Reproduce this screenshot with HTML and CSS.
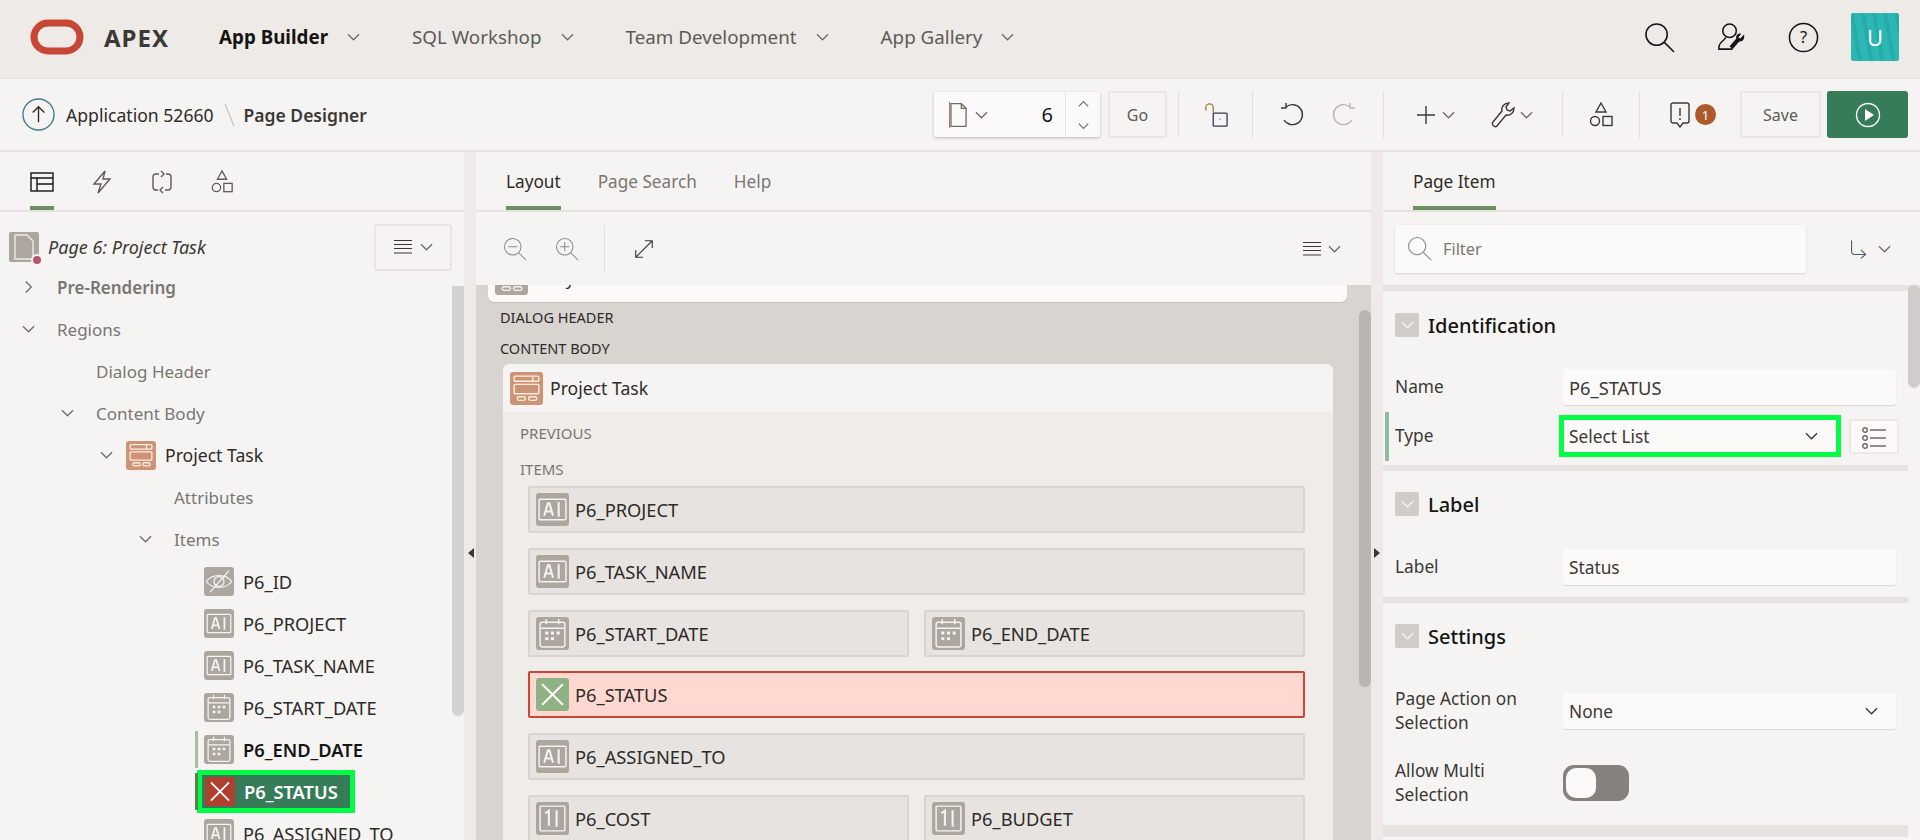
FILE: index.html
```html
<!DOCTYPE html>
<html lang="en">
<head>
    <meta charset="UTF-8">
    <title>Page Designer</title>
    <link rel="stylesheet" href="styles.css">
</head>
<body>
    <svg class="defs" width="0" height="0">
        <symbol id="chev" viewBox="0 0 14 8"><path d="M1 1l6 6 6-6"/></symbol>
        <symbol id="ic-ai" viewBox="0 0 32 32"><rect x="3" y="6" width="26" height="20" rx="1"/><path d="M8 22l3.5-12h1.5l3.5 12M9.500 18h6M22 9v14" stroke-width="2"/></symbol>
        <symbol id="ic-num" viewBox="0 0 32 32"><rect x="4" y="4" width="24" height="24" rx="1"/><path d="M9 11l3.500-2.500V23M20 8v16" stroke-width="2"/></symbol>
        <symbol id="ic-cal" viewBox="0 0 32 32"><rect x="4" y="5" width="24" height="24" rx="2"/><path d="M4 11h24M10 2v5M22 2v5"/><path d="M9 15.500h3M14.500 15.500h3M20 15.500h3M9 21h3M14.500 21h3" stroke-width="2.800"/></symbol>
        <symbol id="ic-eye" viewBox="0 0 32 32"><path d="M2 16c6-8.500 22-8.500 28 0-6 8.500-22 8.500-28 0z"/><circle cx="16" cy="16" r="5.500"/><path d="M6 28L27 4"/></symbol>
        <symbol id="ic-x" viewBox="0 0 32 32"><path d="M6 6l20 20M26 6L6 26" stroke-width="2"/></symbol>
        <symbol id="ic-region" viewBox="0 0 32 32"><rect x="4" y="4" width="24" height="5" rx="1"/><rect x="4" y="12" width="24" height="9" rx="1"/><rect x="7" y="24" width="8" height="3.500" rx="1.700"/><rect x="18" y="24" width="8" height="3.500" rx="1.700"/><path d="M22 4v5"/></symbol>
        <symbol id="ic-shapes" viewBox="0 0 24 26"><path d="M12 1l5 9H7z"/><circle cx="6" cy="19" r="4.500"/><rect x="14" y="14.500" width="9" height="9"/></symbol>
        <symbol id="ic-lines" viewBox="0 0 18 14"><path d="M0 .5h18M0 4.500h18M0 8.500h18M0 13h18"/></symbol>
        <symbol id="ic-search" viewBox="0 0 32 32"><circle cx="13" cy="13" r="11"/><path d="M21 21l10 10"/></symbol>
    </svg>

    <header class="topbar">
        <svg class="logo" viewBox="0 0 54 36"><rect x="4" y="4" width="46" height="28" rx="14"/></svg>
        <span class="brand">APEX</span>
        <nav class="mainnav">
            <a class="nav-link active">App Builder <svg class="chev"><use href="#chev"/></svg></a>
            <a class="nav-link">SQL Workshop <svg class="chev"><use href="#chev"/></svg></a>
            <a class="nav-link">Team Development <svg class="chev"><use href="#chev"/></svg></a>
            <a class="nav-link">App Gallery <svg class="chev"><use href="#chev"/></svg></a>
        </nav>
        <div class="top-actions">
            <svg class="top-icon"><use href="#ic-search"/></svg>
            <svg class="top-icon" viewBox="0 0 32 32"><circle cx="14" cy="9" r="7"/><path d="M10 16c-1 3-7 5-7 10v2h14"/><path class="solid" d="M29 13l-4 4-2-1 3-4c-3-1-6 2-5 5l-7 8 3 3 7-8c3 1 6-2 5-7z"/></svg>
            <svg class="top-icon" viewBox="0 0 32 32"><circle cx="16" cy="16" r="14.500"/><text class="help-mark" x="16" y="22" text-anchor="middle">?</text></svg>
            <span class="avatar">U</span>
        </div>
    </header>

    <div class="toolbar">
        <svg class="up-icon" viewBox="0 0 34 34"><circle cx="17" cy="17" r="16"/><path class="dark" d="M17 25V9M11 15l6-6 6 6"/></svg>
        <span class="crumb">Application 52660</span>
        <span class="crumb-sep"></span>
        <strong class="crumb-now">Page Designer</strong>

        <div class="tools">
            <div class="page-picker">
                <svg class="pg-icon" viewBox="0 0 18 26"><path d="M1 1h11l5 5v19H1z"/><path d="M12 1v5h5"/></svg>
                <svg class="chev"><use href="#chev"/></svg>
                <span class="pg-num">6</span>
                <span class="pg-spin">
                    <svg class="chev flip"><use href="#chev"/></svg>
                    <svg class="chev"><use href="#chev"/></svg>
                </span>
            </div>
            <button class="btn go-btn">Go</button>
            <span class="sep first"></span>
            <svg class="tool lock" viewBox="0 0 26 26"><rect class="navy" x="10" y="11" width="15" height="14" rx="1"/><path class="gold" d="M2 8V5a4 4 0 0 1 8 0v6"/><path class="navy" d="M17.500 17v1"/></svg>
            <span class="sep sep-lock"></span>
            <svg class="tool undo" viewBox="0 0 24 26"><path d="M6 5a10 10 0 1 1-2 13M6 1v5H1"/></svg>
            <svg class="tool redo" viewBox="0 0 24 26"><path d="M18 5a10 10 0 1 0 2 13M18 1v5h5"/></svg>
            <span class="sep sep-redo"></span>
            <svg class="tool plus" viewBox="0 0 18 18"><path d="M9 0v18M0 9h18"/></svg>
            <svg class="chev"><use href="#chev"/></svg>
            <svg class="tool wrench" viewBox="0 0 24 26"><path d="M3 24c-2-1-2-3-1-4L11 9c-1-4 2-8 7-8l-3 4 1 3 3 1 4-3c0 5-4 8-8 7L6 24c-1 1-2 1-3 0z"/></svg>
            <svg class="chev"><use href="#chev"/></svg>
            <span class="sep sep-wrench"></span>
            <svg class="tool shapes"><use href="#ic-shapes"/></svg>
            <span class="sep sep-shapes"></span>
            <svg class="tool alert" viewBox="0 0 20 26"><path d="M3 1h14a2 2 0 0 1 2 2v16a2 2 0 0 1-2 2h-4l-3 4-3-4H3a2 2 0 0 1-2-2V3a2 2 0 0 1 2-2z"/><path d="M10 6v8M10 16v2"/></svg>
            <span class="badge">1</span>
            <button class="btn save-btn">Save</button>
            <button class="btn run-btn"><svg viewBox="0 0 26 26"><circle cx="13" cy="13" r="11.500"/><path class="play" d="M10 7l9 6-9 6z"/></svg></button>
        </div>
    </div>

    <div class="workspace">
        <aside class="left">
            <div class="tabs">
                <span class="icon-tab on"><svg viewBox="0 0 24 22"><rect x="1" y="2" width="22" height="18"/><path d="M1 7h22M7 7v13M7 13h16"/></svg></span>
                <span class="icon-tab"><svg viewBox="0 0 20 24"><path d="M13 1L2 14h7l-3 9 12-14h-7z"/></svg></span>
                <span class="icon-tab"><svg viewBox="0 0 24 24"><path d="M9 4H6a3 3 0 0 0-3 3v10a3 3 0 0 0 3 3h2M15 20h3a3 3 0 0 0 3-3V7a3 3 0 0 0-3-3h-2M11 1l3 3-3 3M13 17l-3 3 3 3"/></svg></span>
                <span class="icon-tab"><svg><use href="#ic-shapes"/></svg></span>
            </div>
            <div class="panel-bar">
                <span class="page-tile">
                    <svg viewBox="0 0 30 30"><path d="M6 3h12l6 6v18H6z"/></svg>
                    <i class="dot"></i>
                </span>
                <em class="page-title">Page 6: Project Task</em>
                <button class="menu-btn"><svg class="lines"><use href="#ic-lines"/></svg><svg class="chev"><use href="#chev"/></svg></button>
            </div>
            <ul class="tree">
                <li class="row lv0 strong"><svg class="chev side"><use href="#chev"/></svg>Pre-Rendering</li>
                <li class="row lv0"><svg class="chev"><use href="#chev"/></svg>Regions</li>
                <li class="row lv1 leaf">Dialog Header</li>
                <li class="row lv1"><svg class="chev"><use href="#chev"/></svg>Content Body</li>
                <li class="row lv2 dark"><svg class="chev"><use href="#chev"/></svg><svg class="tile tile-region"><use href="#ic-region"/></svg>Project Task</li>
                <li class="row lv3 leaf">Attributes</li>
                <li class="row lv3"><svg class="chev"><use href="#chev"/></svg>Items</li>
                <li class="row item"><svg class="tile"><use href="#ic-eye"/></svg>P6_ID</li>
                <li class="row item"><svg class="tile"><use href="#ic-ai"/></svg>P6_PROJECT</li>
                <li class="row item"><svg class="tile"><use href="#ic-ai"/></svg>P6_TASK_NAME</li>
                <li class="row item"><svg class="tile"><use href="#ic-cal"/></svg>P6_START_DATE</li>
                <li class="row item changed"><svg class="tile"><use href="#ic-cal"/></svg>P6_END_DATE</li>
                <li class="row item selected"><span class="sel-box"><svg class="tile tile-red"><use href="#ic-x"/></svg>P6_STATUS</span></li>
                <li class="row item"><svg class="tile"><use href="#ic-ai"/></svg>P6_ASSIGNED_TO</li>
            </ul>
            <span class="scroll-thumb tree-thumb"></span>
        </aside>

        <div class="gutter"><i class="arrow arrow-left"></i></div>

        <main class="center">
            <div class="tabs text-tabs">
                <span class="text-tab on">Layout</span>
                <span class="text-tab">Page Search</span>
                <span class="text-tab">Help</span>
            </div>
            <div class="panel-bar center-bar">
                <svg class="zoom-icon" viewBox="0 0 32 32"><circle cx="13" cy="13" r="11"/><path d="M21 21l10 10M7 13h12"/></svg>
                <svg class="zoom-icon plus-zoom" viewBox="0 0 32 32"><circle cx="13" cy="13" r="11"/><path d="M21 21l10 10M13 7v12M7 13h12"/></svg>
                <span class="bar-sep"></span>
                <svg class="expand" viewBox="0 0 24 24"><path d="M3 21L21 3M13 3h8v8M3 13v8h8"/></svg>
                <span class="bar-end"><svg class="lines"><use href="#ic-lines"/></svg><svg class="chev"><use href="#chev"/></svg></span>
            </div>
            <div class="canvas">
                <div class="top-card"><svg class="tile tile-big"><use href="#ic-region"/></svg><span>Body</span></div>
                <div class="slot-label">DIALOG HEADER</div>
                <div class="slot-label">CONTENT BODY</div>
                <section class="region">
                    <h3 class="region-head"><svg class="tile tile-big tile-region"><use href="#ic-region"/></svg>Project Task</h3>
                    <div class="region-body">
                        <div class="sub-label">PREVIOUS</div>
                        <div class="sub-label items-label">ITEMS</div>
                        <div class="item-grid">
                            <div class="page-item wide"><svg class="tile tile-big"><use href="#ic-ai"/></svg>P6_PROJECT</div>
                            <div class="page-item wide"><svg class="tile tile-big"><use href="#ic-ai"/></svg>P6_TASK_NAME</div>
                            <div class="page-item"><svg class="tile tile-big"><use href="#ic-cal"/></svg>P6_START_DATE</div>
                            <div class="page-item"><svg class="tile tile-big"><use href="#ic-cal"/></svg>P6_END_DATE</div>
                            <div class="page-item wide picked"><svg class="tile tile-big tile-green"><use href="#ic-x"/></svg>P6_STATUS</div>
                            <div class="page-item wide"><svg class="tile tile-big"><use href="#ic-ai"/></svg>P6_ASSIGNED_TO</div>
                            <div class="page-item"><svg class="tile tile-big"><use href="#ic-num"/></svg>P6_COST</div>
                            <div class="page-item"><svg class="tile tile-big"><use href="#ic-num"/></svg>P6_BUDGET</div>
                        </div>
                    </div>
                </section>
                <span class="scroll-thumb canvas-thumb"></span>
            </div>
        </main>

        <div class="gutter"><i class="arrow arrow-right"></i></div>

        <aside class="right">
            <div class="tabs text-tabs prop-tabs">
                <span class="text-tab on">Page Item</span>
            </div>
            <div class="panel-bar prop-bar">
                <div class="filter">
                    <svg class="filter-icon"><use href="#ic-search"/></svg>
                    <span>Filter</span>
                </div>
                <svg class="go-icon" viewBox="0 0 32 24"><path d="M2 1v14c0 3 2 4 4 4h14M14 13l6 6-6 5"/></svg>
                <svg class="chev"><use href="#chev"/></svg>
            </div>
            <div class="props">
                <section class="prop-group first-group">
                    <h4 class="group-head"><span class="collapse"><svg class="chev"><use href="#chev"/></svg></span>Identification</h4>
                    <div class="prop"><label>Name</label><div class="field caps">P6_STATUS</div></div>
                    <div class="prop type-row">
                        <label>Type</label>
                        <div class="field select focus">Select List<svg class="chev"><use href="#chev"/></svg></div>
                        <button class="lov-btn"><svg viewBox="0 0 24 22"><circle cx="3" cy="3" r="2.300"/><circle cx="3" cy="11" r="2.300"/><circle cx="3" cy="19" r="2.300"/><path d="M8 3h16M8 11h16M8 19h16"/></svg></button>
                    </div>
                </section>
                <section class="prop-group label-group">
                    <h4 class="group-head"><span class="collapse"><svg class="chev"><use href="#chev"/></svg></span>Label</h4>
                    <div class="prop"><label>Label</label><div class="field">Status</div></div>
                </section>
                <section class="prop-group settings-group">
                    <h4 class="group-head"><span class="collapse"><svg class="chev"><use href="#chev"/></svg></span>Settings</h4>
                    <div class="prop tall"><label>Page Action on Selection</label><div class="field select">None<svg class="chev"><use href="#chev"/></svg></div></div>
                    <div class="prop tall"><label>Allow Multi Selection</label><span class="toggle"><i></i></span></div>
                </section>
                <section class="prop-group"></section>
                <span class="scroll-thumb prop-thumb"></span>
            </div>
        </aside>
    </div>
</body>
</html>
```

FILE: styles.css
```css
* {
    box-sizing: border-box;
}

html, body {
    height: 840px;
    margin: 0;
    overflow: hidden;
}

body {
    font-family: "Noto Sans", "Open Sans", Arial, sans-serif;
    font-size: 16px;
    color: #2e2b28;
    background: #f5f4f2;
}

.defs {
    position: absolute;
}

svg {
    fill: none;
    stroke: currentColor;
    stroke-width: 1.4;
    flex: none;
}

button {
    font: inherit;
    color: inherit;
    cursor: pointer;
}

.chev {
    width: 13px;
    height: 8px;
    color: #6f6b66;
}
.chev.side {
    transform: rotate(-90deg);
}
.chev.flip {
    transform: rotate(180deg);
}

/* top bar */
.topbar {
    height: 79px;
    display: flex;
    align-items: center;
    padding: 0 0 4px 30px;
    background: #edeae7;
    border-bottom: 1px solid #e4e1de;
}

.logo {
    width: 54px;
    height: 36px;
    color: #c74634;
    stroke-width: 7;
}

.brand {
    margin-left: 20px;
    font-size: 24px;
    font-weight: 700;
    letter-spacing: 1px;
    color: #3b3835;
}

.mainnav {
    display: flex;
    margin-left: 50px;
    gap: 52px;
}

.nav-link {
    display: flex;
    align-items: center;
    gap: 19px;
    font-size: 18.800px;
    color: #5e5a56;
}
.nav-link.active {
    font-weight: 700;
    color: #161513;
}

.top-actions {
    margin-left: auto;
    margin-right: 21px;
    display: flex;
    align-items: center;
    gap: 41px;
}

.top-icon {
    width: 31px;
    height: 31px;
    color: #161513;
    stroke-width: 1.6;
}
.top-icon .solid {
    fill: #161513;
    stroke: none;
}
.help-mark {
    font-size: 17px;
    fill: #161513;
    stroke: none;
}

.avatar {
    width: 48px;
    height: 48px;
    margin-left: -9px;
    display: flex;
    align-items: center;
    justify-content: center;
    border-radius: 2px;
    background: repeating-linear-gradient(80deg, #2bb8b5 0 7px, #27aaa8 7px 11px);
    color: #fff;
    font-size: 22px;
}

/* toolbar */
.toolbar {
    height: 73px;
    display: flex;
    align-items: center;
    padding-left: 22px;
    border-bottom: 2px solid #e5e2df;
}

.up-icon {
    width: 33px;
    height: 33px;
    color: #3f7e89;
}
.up-icon .dark {
    color: #2e2b28;
}

.crumb {
    margin-left: 11px;
    font-size: 17.600px;
}
.crumb-sep {
    width: 1px;
    height: 24px;
    margin: 0 14px 0 15px;
    background: #b9b5b1;
    transform: rotate(-22deg);
}
.crumb-now {
    font-size: 17.500px;
    font-weight: 600;
    color: #3b3835;
}

.tools {
    margin-left: auto;
    margin-right: 12px;
    display: flex;
    align-items: center;
}

.page-picker {
    width: 166px;
    height: 45px;
    display: flex;
    align-items: center;
    padding-left: 15px;
    background: #fbfaf8;
    border-radius: 2px;
    box-shadow: 0 1px 3px rgba(0, 0, 0, .25);
}
.pg-icon {
    width: 18px;
    height: 26px;
    color: #6f6b66;
    border-left: 1px solid #b9795f;
}
.page-picker .chev {
    margin-left: 8px;
}
.pg-num {
    margin-left: auto;
    margin-right: 12px;
    font-size: 20px;
    color: #161513;
}
.pg-spin {
    width: 35px;
    height: 100%;
    display: flex;
    flex-direction: column;
    align-items: center;
    justify-content: center;
    gap: 14px;
    border-left: 1px solid #e5e2df;
}
.pg-spin .chev {
    margin: 0;
    width: 11px;
}

.btn {
    height: 47px;
    background: #f5f4f2;
    border: 2px solid #e8e5e2;
    border-radius: 3px;
    font-size: 16px;
    color: #5e5a56;
}
.go-btn {
    width: 59px;
    margin-left: 8px;
}
.save-btn {
    width: 81px;
    margin-left: 24px;
}
.run-btn {
    width: 81px;
    margin-left: 6px;
    display: flex;
    align-items: center;
    justify-content: center;
    background: #367c58;
    border-color: #367c58;
    color: #fff;
}
.run-btn svg {
    width: 26px;
    height: 26px;
}
.run-btn .play {
    fill: #fff;
    stroke: none;
}

.sep {
    width: 1px;
    height: 47px;
    background: #e2dfdc;
}
.sep.first {
    margin-left: 11px;
}
.sep-lock {
    margin-left: 24px;
}
.sep-redo {
    margin-left: 27px;
}
.sep-wrench {
    margin-left: 29px;
}
.sep-shapes {
    margin-left: 26px;
}

.tool {
    width: 24px;
    height: 26px;
    color: #3b3835;
}
.tool.lock {
    margin-left: 25px;
}
.lock .navy {
    color: #2e3a5c;
}
.lock .gold {
    color: #9a7b3c;
}
.tool.undo {
    margin-left: 27px;
}
.tool.redo {
    margin-left: 28px;
    color: #b9b5b1;
}
.tool.plus {
    width: 18px;
    height: 18px;
    margin-left: 33px;
}
.tools > .plus + .chev {
    margin: 0 36px 0 7px;
}
.tools > .wrench + .chev {
    margin-left: 5px;
}
.tool.shapes {
    margin-left: 26px;
}
.tool.alert {
    width: 20px;
    margin-left: 30px;
}

.badge {
    width: 21px;
    height: 21px;
    margin-left: 5px;
    display: flex;
    align-items: center;
    justify-content: center;
    border-radius: 50%;
    background: #ac5a2c;
    color: #fff;
    font-size: 13px;
}

/* main area */
.workspace {
    height: 688px;
    display: flex;
}

.left {
    position: relative;
    width: 464px;
    overflow: hidden;
}

.gutter {
    position: relative;
    width: 12px;
    background: #edeae7;
}

.arrow {
    position: absolute;
    top: 396px;
    width: 0;
    height: 0;
    border-top: 5px solid transparent;
    border-bottom: 5px solid transparent;
}
.arrow-left {
    left: 4px;
    border-right: 6px solid #3b3835;
}
.arrow-right {
    left: 3px;
    border-left: 6px solid #3b3835;
}

.center {
    width: 895px;
    display: flex;
    flex-direction: column;
}

.right {
    width: 537px;
    display: flex;
    flex-direction: column;
}

.tabs {
    height: 60px;
    display: flex;
    border-bottom: 2px solid #e5e2df;
}

.icon-tab {
    width: 24px;
    height: 58px;
    padding-top: 18px;
    margin-right: 36px;
    color: #5e5a56;
}
.icon-tab:first-child {
    margin-left: 30px;
    color: #161513;
}
.icon-tab.on {
    border-bottom: 4px solid #6b8e62;
}
.icon-tab svg {
    display: block;
    width: 24px;
    height: 24px;
}

.text-tabs {
    padding-left: 30px;
    gap: 37px;
}
.text-tab {
    height: 58px;
    padding-top: 18px;
    font-size: 17.200px;
    color: #7a7672;
}
.text-tab.on {
    color: #2e2b28;
    border-bottom: 4px solid #6b8e62;
}

.panel-bar {
    display: flex;
    align-items: center;
    height: 73px;
}

.left .panel-bar {
    height: 54px;
    padding: 16px 12px 0 9px;
}

.page-tile {
    position: relative;
    width: 30px;
    height: 30px;
    border-radius: 2px;
    background: #ada69e;
}
.page-tile svg {
    width: 30px;
    height: 30px;
    color: #edeae7;
}
.dot {
    position: absolute;
    right: -4px;
    bottom: -4px;
    width: 12px;
    height: 12px;
    border-radius: 50%;
    background: #b5566f;
    border: 2px solid #f5f4f2;
}

.page-title {
    margin-left: 9px;
    font-size: 18px;
    color: #3b3835;
}

.menu-btn {
    width: 78px;
    height: 47px;
    margin-left: auto;
    display: flex;
    align-items: center;
    justify-content: center;
    gap: 8px;
    background: #f5f4f2;
    border: 2px solid #e8e5e2;
    border-radius: 3px;
}
.lines {
    width: 18px;
    height: 14px;
    color: #3b3835;
    stroke-width: 1;
}

/* tree */
.tree {
    list-style: none;
    margin: 0;
    padding: 0;
}
.row {
    position: relative;
    height: 42px;
    display: flex;
    align-items: center;
    font-size: 17px;
    color: #7a7672;
}
.row .chev {
    margin-right: 16px;
}
.lv0 {
    padding-left: 22px;
}
.row.lv0 .chev {
    margin-right: 22px;
}
.lv1 {
    padding-left: 61px;
}
.row.lv1 .chev {
    margin-right: 22px;
}
.leaf.lv1 {
    padding-left: 96px;
}
.lv2 {
    padding-left: 100px;
}
.row.lv2 .chev {
    margin-right: 13px;
}
.lv3 {
    padding-left: 139px;
}
.row.lv3 .chev {
    margin-right: 22px;
}
.leaf.lv3 {
    padding-left: 174px;
}
.row.strong {
    font-weight: 600;
}
.row.dark {
    font-size: 17.600px;
    color: #2e2b28;
}
.row.item {
    font-size: 18.300px;
    color: #2e2b28;
}
.item {
    padding-left: 204px;
}

.tile {
    width: 30px;
    height: 29px;
    margin-right: 9px;
    border-radius: 3px;
    background: #ada69e;
    color: #f5f4f2;
}
.tile-region {
    background: #cd9377;
    color: #fbeedd;
}
.tile-red {
    background: #b03f2e;
    color: #fff;
}
.tile-green {
    background: #8fb284;
    color: #fff;
}
.tile-big {
    width: 33px;
    height: 33px;
    margin-right: 6px;
}

.row.changed {
    font-weight: 600;
    color: #161513;
}
.changed::before, .selected::before {
    content: "";
    position: absolute;
    left: 195px;
    top: 3px;
    bottom: 2px;
    width: 3px;
    background: #a3bf9c;
}
.selected::before {
    background: #5c7f5a;
}

.sel-box {
    display: flex;
    align-items: center;
    width: 158px;
    height: 43px;
    margin-left: -7px;
    padding-left: 3px;
    background: #367c58;
    border: 5px solid #00ff44;
    font-weight: 600;
    color: #fff;
}
.sel-box .tile {
    margin-right: 9px;
}

.scroll-thumb {
    position: absolute;
    width: 12px;
    border-radius: 0 0 6px 6px;
    background: #d3d2d0;
}
.tree-thumb {
    right: 0;
    top: 134px;
    height: 430px;
}

/* layout canvas */
.center-bar {
    padding-left: 27px;
}
.zoom-icon {
    width: 24px;
    height: 24px;
    color: #8d8a86;
}
.plus-zoom {
    margin-left: 28px;
}
.bar-sep {
    width: 1px;
    height: 47px;
    margin-left: 25px;
    background: #e2dfdc;
}
.expand {
    width: 22px;
    height: 22px;
    margin-left: 28px;
    color: #3b3835;
    stroke-width: 1.2;
}
.bar-end {
    margin-left: auto;
    margin-right: 30px;
    display: flex;
    align-items: center;
    gap: 7px;
}

.canvas {
    position: relative;
    flex: 1;
    overflow: hidden;
    padding: 0 24px 0 12px;
    background: #d8d4d0;
}

.top-card {
    height: 17px;
    display: flex;
    align-items: flex-end;
    padding: 0 0 7px 7px;
    overflow: hidden;
    background: #fbfaf8;
    border-radius: 0 0 6px 6px;
    box-shadow: 0 1px 1px rgba(0, 0, 0, .1);
    font-size: 17px;
}
.top-card span {
    line-height: 33px;
}

.slot-label {
    height: 31px;
    line-height: 31px;
    padding-left: 12px;
    font-size: 14.500px;
}

.region {
    margin: 0 14px 0 15px;
    border-radius: 6px 6px 0 0;
    overflow: hidden;
}
.region-head {
    height: 48px;
    margin: 0;
    padding-left: 7px;
    display: flex;
    align-items: center;
    font-size: 17.600px;
    font-weight: 400;
    background: #f5f4f2;
}
.region-head .tile {
    margin-right: 7px;
}
.region-body {
    padding: 0 28px 0 25px;
    background: #efece9;
}
.sub-label {
    height: 36px;
    line-height: 42px;
    margin-left: -8px;
    font-size: 15px;
    color: #7a7672;
}
.items-label {
    height: 38px;
}

.item-grid {
    display: grid;
    grid-template-columns: 1fr 1fr;
    column-gap: 15px;
    row-gap: 14.750px;
}

.page-item {
    height: 47px;
    display: flex;
    align-items: center;
    padding-left: 6px;
    font-size: 18.300px;
    background: #e6e3e0;
    border: 2px solid #d8d4d0;
    border-radius: 2px;
}
.page-item.wide {
    grid-column: span 2;
}
.page-item.picked {
    background: #ffd8d1;
    border-color: #c74634;
}

.canvas-thumb {
    right: 0;
    top: 25px;
    height: 377px;
    border-radius: 6px;
    background: #b9b5b1;
}

/* property editor */
.prop-bar {
    padding-left: 12px;
}
.filter {
    width: 411px;
    height: 48px;
    display: flex;
    align-items: center;
    gap: 11px;
    padding-left: 12px;
    background: #fbfaf8;
    border-radius: 3px;
    box-shadow: 0 1px 2px rgba(0, 0, 0, .15);
    color: #7a7672;
    font-size: 16.300px;
}
.filter-icon {
    width: 25px;
    height: 25px;
    color: #8d8a86;
}
.go-icon {
    width: 25px;
    height: 24px;
    margin-left: 44px;
    color: #4b5c70;
}
.prop-bar .chev {
    margin-left: 3px;
}

.props {
    position: relative;
    flex: 1;
    overflow: hidden;
    padding: 6px 12px 0 0;
    background: #f5f4f2;
}
.props::before {
    content: "";
    position: absolute;
    left: 0;
    right: 0;
    top: 0;
    height: 6px;
    background: #e5e2df;
}

.prop-group {
    background: #f5f4f2;
    border-bottom: 6px solid #e5e2df;
    padding: 0 12px;
}
.first-group {
    height: 180px;
}
.label-group {
    height: 132px;
}
.settings-group {
    height: 228px;
}

.group-head {
    height: 68px;
    margin: 0;
    display: flex;
    align-items: center;
    gap: 9px;
    font-size: 20px;
    font-weight: 500;
    color: #161513;
}
.label-group .group-head, .settings-group .group-head {
    height: 66px;
}

.collapse {
    width: 24px;
    height: 24px;
    display: flex;
    align-items: center;
    justify-content: center;
    border-radius: 2px;
    background: #d0cdc9;
}
.collapse .chev {
    color: #f5f4f2;
}

.prop {
    position: relative;
    display: grid;
    grid-template-columns: 168px 1fr;
    align-items: center;
    margin-top: 10px;
    font-size: 17.300px;
    color: #3b3835;
}
.label-group .prop {
    margin-top: 12px;
}
.prop label {
    line-height: 24px;
    padding-right: 30px;
}

.field {
    height: 36px;
    display: flex;
    align-items: center;
    padding-left: 6px;
    background: #fbfaf8;
    border-radius: 3px;
    box-shadow: 0 1px 1px rgba(0, 0, 0, .12);
}
.field.caps {
    font-size: 18.300px;
}
.field.select {
    justify-content: space-between;
    padding-right: 18px;
}
.field.select .chev {
    color: #3b3835;
}

.type-row {
    grid-template-columns: 168px 274px 1fr;
    margin-top: 10px;
}
.type-row::before {
    content: "";
    position: absolute;
    left: -10px;
    top: -3px;
    bottom: -4px;
    width: 4px;
    background: #92bb9f;
}
.field.focus {
    height: 42px;
    width: 282px;
    margin-left: -4px;
    padding-left: 5px;
    border: 5px solid #00ff44;
    border-radius: 0;
    box-shadow: none;
}
.lov-btn {
    height: 35px;
    margin-left: 12px;
    padding: 6px 11px;
    background: #fbfaf8;
    border: 2px solid #ebe8e5;
    border-radius: 3px;
    color: #6f6b66;
}
.lov-btn svg {
    display: block;
    width: 24px;
    height: 22px;
}

.prop.tall {
    height: 72px;
    margin-top: 0;
}
.group-head + .prop.tall {
    margin-top: 6px;
}

.toggle {
    display: block;
    width: 66px;
    height: 36px;
    padding: 3px;
    border-radius: 11px;
    background: #85817c;
}
.toggle i {
    display: block;
    width: 30px;
    height: 30px;
    border-radius: 10px;
    background: #fbfaf8;
}

.prop-thumb {
    right: 0;
    top: 0;
    height: 103px;
    border-radius: 6px;
    background: #cfccc9;
}
```
